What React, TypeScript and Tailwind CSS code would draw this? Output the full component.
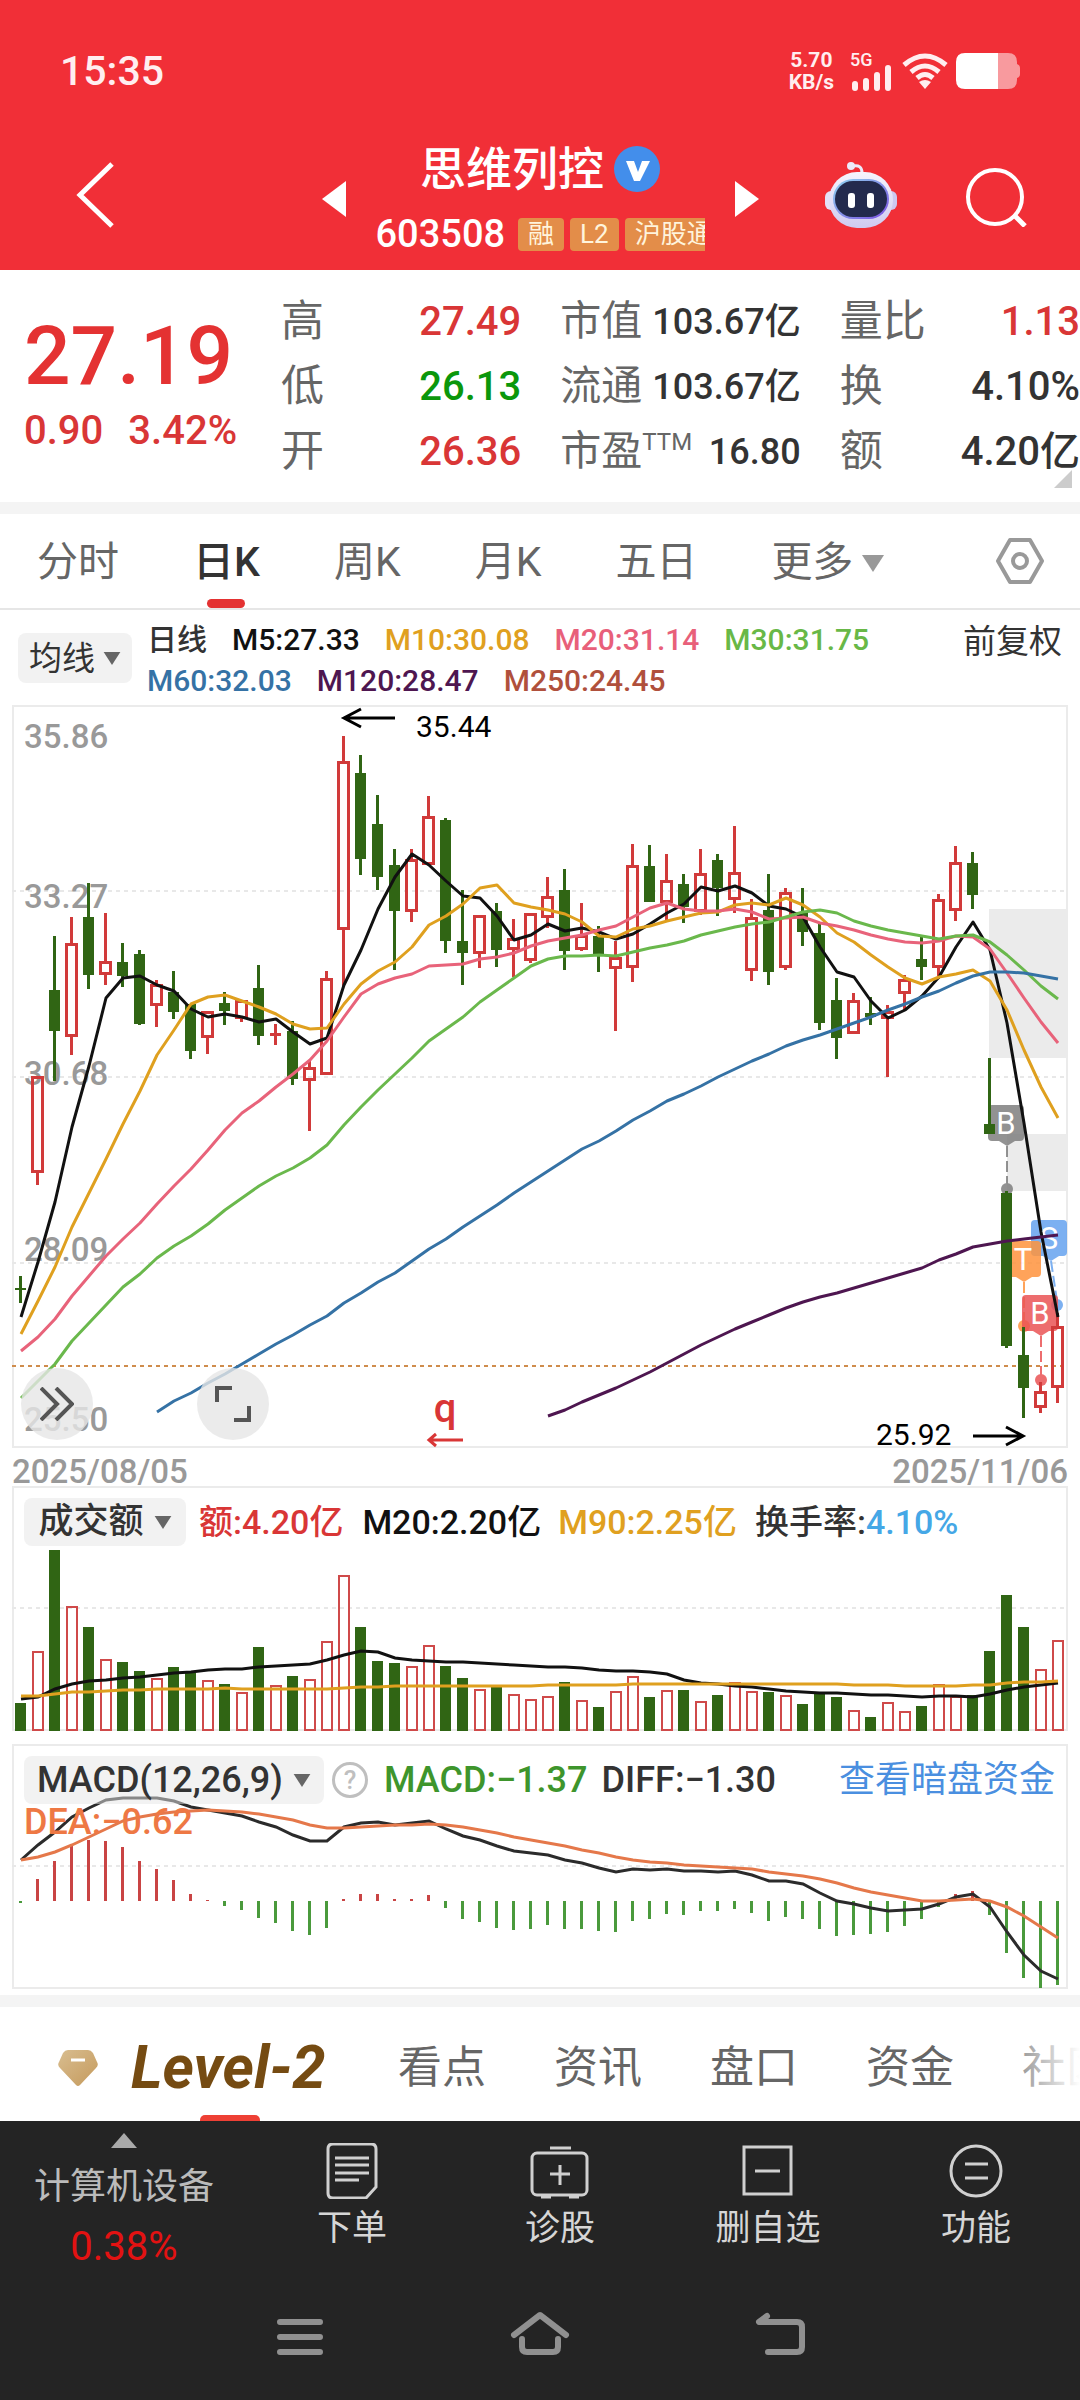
import React from "react";

type Candle = ["r" | "g", number, number, number, number];

/* direction, high, body top, body bottom, low (chart units) */
const CANDLES: Candle[] = [
  ["g", 576, 588, 590, 603], ["r", 376, 376, 473, 485], ["g", 236, 290, 331, 381], ["r", 217, 243, 337, 355],
  ["g", 183, 217, 275, 289], ["r", 213, 261, 275, 285], ["g", 243, 262, 276, 287], ["g", 250, 254, 324, 325],
  ["r", 280, 284, 306, 327], ["g", 271, 292, 312, 319], ["g", 304, 304, 351, 359], ["r", 311, 311, 338, 354],
  ["g", 292, 303, 311, 325], ["r", 300, 300, 319, 322], ["g", 265, 288, 336, 345], ["r", 324, 334, 336, 345],
  ["g", 321, 331, 379, 385], ["r", 361, 367, 381, 431], ["r", 271, 278, 375, 375], ["r", 36, 61, 230, 286],
  ["g", 55, 73, 159, 175], ["g", 95, 124, 177, 190], ["g", 149, 165, 211, 270], ["r", 149, 159, 212, 222],
  ["r", 96, 116, 165, 165], ["g", 118, 120, 241, 253], ["g", 190, 241, 253, 285], ["r", 215, 215, 254, 268],
  ["g", 203, 211, 250, 267], ["r", 219, 238, 250, 277], ["r", 213, 213, 261, 263], ["r", 177, 196, 218, 228],
  ["g", 169, 190, 251, 270], ["r", 203, 235, 250, 251], ["g", 226, 236, 254, 272], ["r", 241, 257, 269, 331],
  ["r", 144, 165, 268, 282], ["g", 145, 166, 202, 202], ["r", 154, 180, 203, 222], ["g", 174, 184, 207, 223],
  ["r", 149, 173, 212, 215], ["g", 154, 160, 188, 216], ["r", 126, 172, 200, 213], ["r", 199, 217, 271, 281],
  ["g", 174, 210, 272, 285], ["r", 188, 192, 268, 270], ["g", 188, 212, 232, 246], ["g", 223, 233, 323, 330],
  ["g", 278, 300, 338, 359], ["r", 293, 300, 334, 334], ["g", 297, 313, 317, 325], ["r", 305, 311, 319, 377],
  ["r", 275, 279, 294, 311], ["g", 236, 259, 267, 280], ["r", 194, 199, 268, 279], ["r", 146, 162, 211, 221],
  ["g", 152, 163, 195, 209], ["g", 358, 424, 434, 434], ["g", 491, 493, 646, 648], ["g", 627, 655, 688, 718],
  ["r", 682, 691, 708, 713], ["r", 613, 626, 688, 703],
];

const MA5 = [617,562,502,427,366,298,278,276,285,291,309,317,314,317,322,319,332,344,338,285,250,209,177,154,165,181,196,198,216,240,235,224,231,228,232,239,234,224,213,204,187,191,186,193,206,209,217,247,272,277,301,318,310,296,277,247,222,250,323,423,532,617];
const MA10 = [634,601,567,527,493,459,424,391,355,330,304,297,295,301,307,314,324,329,328,304,284,271,262,247,225,216,204,188,185,203,207,210,214,222,236,237,229,226,221,217,213,212,205,203,205,198,205,217,233,242,255,267,278,284,277,274,270,281,310,350,387,418];
const MA20 = [651,637,619,596,576,556,539,523,504,486,469,450,430,413,401,387,374,360,341,317,294,284,278,274,266,265,264,259,257,253,246,241,238,235,230,226,217,208,203,209,211,211,209,212,219,218,217,223,226,230,235,239,242,243,241,236,237,249,273,298,322,343];
const MA30 = [698,681,664,641,623,605,587,574,558,546,536,524,510,498,486,476,468,458,445,425,407,390,374,358,341,329,317,302,290,278,266,259,256,256,255,256,252,248,245,241,235,231,227,224,222,217,212,210,213,221,226,230,233,236,239,236,235,242,255,270,286,299];
const MA60 = [712,701,693,683,674,664,654,644,635,625,616,603,593,582,573,561,549,539,527,516,505,493,482,471,460,449,441,431,420,411,401,394,386,377,369,361,354,346,340,335,329,323,317,310,304,297,291,283,276,272,272,273,276,279];
const MA120 = [716,710,702,695,688,680,672,663,654,645,637,629,622,615,608,602,597,593,588,583,578,573,568,560,554,547,544,541,539,537,535];

const VOLUMES = [253,201,100,156,177,209,212,221,228,217,223,230,234,242,197,235,226,229,191,125,177,211,213,216,195,216,228,239,237,244,249,246,232,250,257,241,226,247,240,240,251,245,232,241,242,245,254,244,247,260,267,252,261,256,234,246,245,201,145,177,219,190];
const VMA20 = [249,247,239,234,231,230,228,227,225,223,222,220,219,219,217,216,215,214,210,205,201,202,208,210,211,212,212,213,214,215,216,217,217,218,220,221,221,222,224,230,233,234,236,237,239,241,242,243,243,244,245,245,246,247,246,246,247,244,240,237,235,233];
const VMA90 = [246,246,244,242,242,241,240,240,239,239,239,239,238,239,239,239,239,239,239,238,237,237,236,236,236,236,236,236,236,236,236,235,235,235,235,235,234,234,234,234,234,234,234,234,234,234,234,234,234,235,235,235,236,236,236,236,235,235,233,232,232,231];

const MACD_BARS = [173,149,131,116,110,111,117,131,139,150,164,170,176,180,188,193,201,205,198,169,164,164,169,169,165,178,189,192,198,200,199,195,199,199,201,202,191,189,184,185,181,181,179,183,191,187,189,199,206,205,204,202,196,189,177,164,161,185,223,248,258,255];
const DIFF = [130,115,102,87,78,70,68,68,68,71,77,80,83,86,92,97,105,111,111,97,93,92,95,93,91,99,106,110,116,121,123,125,130,133,138,142,139,140,139,141,141,142,141,145,151,151,154,163,171,174,178,181,180,179,174,167,164,177,202,225,241,249];
const DEA = [130,127,122,115,107,99,91,87,84,82,81,80,81,82,84,87,90,95,98,98,97,96,95,95,94,95,97,100,103,107,110,113,116,120,123,127,130,132,133,135,136,137,138,139,142,144,146,149,153,158,162,165,168,171,171,170,169,171,177,186,197,208];

const FIRST_X = 20;
const STEP = 17;
const MACD_ZERO = 171;

const line = (values: number[], start = 0) =>
  values.map((y, i) => `${FIRST_X + 1 + (i + start) * STEP},${y}`).join(" ");

function Caret({ className }: { className: string }) {
  return (
    <svg viewBox="0 0 18 14" className={className} aria-hidden="true">
      <path d="M0 0H18L9 14Z" fill="currentColor" />
    </svg>
  );
}

function StatusBar() {
  return (
    <div className="flex h-[142px] items-center justify-between pr-[60px] pl-[60px] font-medium text-[#ffeef0]">
      <span className="text-[41px] leading-none">15:35</span>
      <div className="flex items-center">
        <div className="mr-4 text-center text-[21px] leading-[22px] font-bold">
          <div>5.70</div>
          <div>KB/s</div>
        </div>
        <div className="mr-2 h-[40px] w-[44px]">
          <div className="text-[18px] leading-[18px]">5G</div>
          <svg viewBox="0 0 44 26" className="-mt-1 h-[26px] w-[44px]" fill="currentColor" aria-hidden="true">
            <rect x="2" y="16" width="6" height="10" rx="3" />
            <rect x="13" y="13" width="6" height="13" rx="3" />
            <rect x="24" y="7" width="6" height="19" rx="3" />
            <rect x="35" y="0" width="6" height="26" rx="3" />
          </svg>
        </div>
        <svg viewBox="0 0 46 36" className="mr-2 h-[36px] w-[46px]" fill="none" stroke="currentColor" strokeWidth="5" aria-hidden="true">
          <path d="M2 12Q23-6 44 12" />
          <path d="M9 19Q23 7 37 19" />
          <path d="M15 25Q23 18 31 25" />
          <path d="M17 29Q23 25 29 29L23 36Z" fill="currentColor" stroke="none" />
        </svg>
        <svg viewBox="0 0 64 36" className="h-[36px] w-[64px]" aria-hidden="true">
          <path d="M42 0H52Q61 0 61 9V11Q64 12 64 15V21Q64 24 61 25V27Q61 36 52 36H42Z" fill="#f89a9e" />
          <path d="M9 0H42V36H9Q0 36 0 27V9Q0 0 9 0Z" fill="#fff" />
        </svg>
      </div>
    </div>
  );
}

function Robot() {
  return (
    <svg viewBox="0 0 72 66" className="h-[66px] w-[72px]" aria-hidden="true">
      <defs>
        <linearGradient id="shell" x1="0" y1="0" x2="0" y2="1">
          <stop offset="0" stopColor="#f6f4fd" />
          <stop offset="1" stopColor="#cfcaf0" />
        </linearGradient>
        <linearGradient id="rim" x1="0" y1="0" x2="1" y2="1">
          <stop offset="0" stopColor="#8fd4f0" />
          <stop offset="1" stopColor="#7a4fe0" />
        </linearGradient>
      </defs>
      <path d="M37 11C37 5 34 3 28 4" fill="none" stroke="#eceafa" strokeWidth="3" />
      <circle cx="26" cy="4" r="4" fill="#eceafa" />
      <rect x="0" y="29" width="12" height="19" rx="6" fill="#e4e1f7" />
      <rect x="60" y="29" width="12" height="19" rx="6" fill="#cdc8f0" />
      <rect x="4" y="10" width="64" height="56" rx="28" fill="url(#shell)" />
      <rect x="8" y="17" width="56" height="40" rx="20" fill="url(#rim)" />
      <rect x="10" y="19" width="52" height="36" rx="18" fill="#232a4d" />
      <rect x="23" y="31" width="7" height="15" rx="3" fill="#fff" />
      <rect x="42" y="31" width="7" height="15" rx="3" fill="#fff" />
    </svg>
  );
}

function Header() {
  return (
    <header className="bg-[#f12f37] text-white">
      <StatusBar />
      <div className="grid h-[128px] grid-cols-[1fr_auto_1fr] items-start">
        <button aria-label="返回" className="mt-[20px] ml-[75px] w-[40px]">
          <svg viewBox="0 0 40 66" className="h-[66px] w-[40px]" fill="none" stroke="#fff" strokeWidth="5">
            <path d="M37 2L5 33L37 64" />
          </svg>
        </button>
        <div className="flex items-center gap-[30px]">
          <button aria-label="上一只">
            <svg viewBox="0 0 24 36" className="h-[36px] w-[24px]"><path d="M24 0V36L0 18Z" fill="#fff" /></svg>
          </button>
          <div className="w-[329px]">
            <div className="flex h-[54px] items-center justify-center gap-[10px]">
              <h1 className="text-[46px] leading-none font-medium">思维列控</h1>
              <svg viewBox="0 0 46 46" className="h-[46px] w-[46px]" aria-label="认证">
                <circle cx="23" cy="23" r="23" fill="#438eeb" />
                <path d="M12 15H20L24 26L28 15H36L26 35H20Z" fill="#fff" />
              </svg>
            </div>
            <div className="mt-[16px] flex h-[44px] items-center gap-[6px] overflow-hidden text-[#fff4dc]">
              <span className="mr-[7px] text-[38px] leading-none font-medium text-white">603508</span>
              <span className="shrink-0 rounded bg-[#e38d49] px-[10px] text-[26px] leading-[33px]">融</span>
              <span className="shrink-0 rounded bg-[#e38d49] px-[10px] text-[26px] leading-[33px]">L2</span>
              <span className="shrink-0 rounded bg-[#e38d49] px-[10px] text-[26px] leading-[33px]">沪股通</span>
            </div>
          </div>
          <button aria-label="下一只">
            <svg viewBox="0 0 24 36" className="h-[36px] w-[24px]"><path d="M0 0V36L24 18Z" fill="#fff" /></svg>
          </button>
        </div>
        <div className="mt-[20px] flex justify-end gap-[68px] pr-[53px]">
          <button aria-label="智能助手"><Robot /></button>
          <button aria-label="搜索">
            <svg viewBox="0 0 62 64" className="h-[64px] w-[62px]" fill="none" stroke="#fff" strokeWidth="4">
              <circle cx="30" cy="34" r="27" />
              <path d="M49 52L60 63" strokeWidth="5" />
            </svg>
          </button>
        </div>
      </div>
    </header>
  );
}

const QUOTES: { label: React.ReactNode; value: string; tone: string; compact?: boolean }[][] = [
  [
    { label: "高", value: "27.49", tone: "text-[#d93636]" },
    { label: "低", value: "26.13", tone: "text-[#0b970b]" },
    { label: "开", value: "26.36", tone: "text-[#d93636]" },
  ],
  [
    { label: "市值", value: "103.67亿", tone: "text-[#333]", compact: true },
    { label: "流通", value: "103.67亿", tone: "text-[#333]", compact: true },
    { label: <>市盈<span className="self-start text-[24px] leading-[46px]">TTM</span></>, value: "16.80", tone: "text-[#333]", compact: true },
  ],
  [
    { label: "量比", value: "1.13", tone: "text-[#d93636]" },
    { label: "换", value: "4.10%", tone: "text-[#333]" },
    { label: "额", value: "4.20亿", tone: "text-[#333]" },
  ],
];

function Quote() {
  return (
    <section className="relative flex pt-[19px] pb-[18px]">
      <div className="w-[281px] shrink-0 pt-[26px] pl-6 text-[#d93636]">
        <div className="text-[82px] leading-[82px] font-medium text-[#e43232]">27.19</div>
        <div className="mt-[14px] flex gap-[25px] text-[40px] leading-[40px] font-medium">
          <span>0.90</span>
          <span>3.42%</span>
        </div>
      </div>
      <div className="grid flex-1 grid-cols-3 gap-x-[39px]">
        {QUOTES.map((col, i) => (
          <dl key={i}>
            {col.map((q, j) => (
              <div key={j} className="flex h-[65px] items-center justify-between whitespace-nowrap">
                <dt className={q.compact ? "flex text-[41px] leading-[65px] text-[#666]" : "text-[43px] text-[#666]"}>{q.label}</dt>
                <dd className={`${q.tone} ${q.compact ? "text-[36px]" : "text-[40px]"} font-medium`}>{q.value}</dd>
              </div>
            ))}
          </dl>
        ))}
      </div>
      <svg viewBox="0 0 18 18" className="absolute right-[8px] bottom-[14px] h-[18px] w-[18px]" aria-hidden="true">
        <path d="M18 0V18H0Z" fill="#ccc" />
      </svg>
    </section>
  );
}

function PeriodTabs() {
  return (
    <nav className="flex h-[96px] items-stretch gap-[74px] border-b-2 border-[#e6e6e6] pr-[36px] pl-[37px] text-[41px] text-[#666]">
      {["分时", "日K", "周K", "月K", "五日"].map((t) => (
        <button key={t} className={t === "日K" ? "relative pt-1 font-medium text-[#333]" : "pt-1"}>
          {t}
          {t === "日K" && <span className="absolute bottom-0 left-1/2 h-[9px] w-[38px] -translate-x-1/2 rounded-full bg-[#e43232]" />}
        </button>
      ))}
      <button className="flex items-center gap-[9px] pt-1">
        更多
        <Caret className="h-[19px] w-[22px] text-[#999]" />
      </button>
      <button aria-label="设置" className="ml-auto">
        <svg viewBox="0 0 48 46" className="h-[46px] w-[48px]" fill="none" stroke="#999" strokeWidth="4" strokeLinejoin="round">
          <path d="M14 2H34L46 23L34 44H14L2 23Z" />
          <circle cx="24" cy="23" r="7" />
        </svg>
      </button>
    </nav>
  );
}

const MA_LEGEND = [
  ["日线", "text-[#333]"],
  ["M5:27.33", "text-[#111]"],
  ["M10:30.08", "text-[#e0a020]"],
  ["M20:31.14", "text-[#e8607a]"],
  ["M30:31.75", "text-[#68b847]"],
  ["M60:32.03", "text-[#3572a5]"],
  ["M120:28.47", "text-[#4e1650]"],
  ["M250:24.45", "text-[#b0503c]"],
];

function MaLegend() {
  return (
    <div className="flex h-[95px] items-center pr-[18px] pl-[18px]">
      <button className="flex h-[50px] w-[114px] shrink-0 items-center justify-center gap-[8px] rounded-lg bg-[#f2f2f2] pt-[2px] text-[33px] text-[#333]">
        均线
        <Caret className="h-[13px] w-[18px] text-[#666]" />
      </button>
      <div className="ml-[15px] flex flex-1 flex-wrap gap-x-[25px] pt-[5px] text-[30px] leading-[41px]">
        {MA_LEGEND.map(([t, c]) => <span key={t} className={`${c} font-medium`}>{t}</span>)}
      </div>
      <button className="mb-[32px] text-[33px] leading-[40px] text-[#333]">前复权</button>
    </div>
  );
}

function Flag({ x, y, color, letter, tipX, dotX, dotY }: { x: number; y: number; color: string; letter: string; tipX: number; dotX: number; dotY: number }) {
  return (
    <g opacity="0.85">
      <path d={`M${tipX} ${y + 41}L${dotX} ${dotY - 4}`} stroke={color} strokeWidth="2" strokeDasharray="11 4" />
      <circle cx={dotX} cy={dotY} r="6" fill={color} />
      <path d={`M${tipX - 8} ${y + 36}H${tipX + 8}L${tipX} ${y + 41}Z`} fill={color} />
      <rect x={x} y={y} width="36" height="36" rx="4" fill={color} />
      <text x={x + 18} y={y + 29} textAnchor="middle" fontSize="31" fill="#fff">{letter}</text>
    </g>
  );
}

function CandleChart() {
  return (
    <div className="relative">
      <svg viewBox="12 5 1056 743" className="block h-auto w-full overflow-visible" fill="none" aria-label="日K线图">
        <rect x="13" y="6" width="1054" height="741" stroke="#ebebeb" strokeWidth="2" />
        {[191, 377, 563].map((y) => (
          <path key={y} d={`M12 ${y}H1068`} stroke="#e8e8e8" strokeWidth="2" strokeDasharray="4 4" />
        ))}
        <rect x="989" y="209" width="79" height="149" fill="#ebebeb" />
        <rect x="1007" y="434" width="61" height="57" fill="#ebebeb" />
        <path d="M12 666H1068" stroke="#cf8c4c" strokeWidth="2" strokeDasharray="4 4" />
        <g fill="#999" fontSize="33" fontWeight="500">
          <text x="24" y="48">35.86</text>
          <text x="24" y="208">33.27</text>
          <text x="24" y="385">30.68</text>
          <text x="24" y="561">28.09</text>
          <text x="24" y="731">25.50</text>
        </g>
        <Flag x={988} y={405} color="#808080" letter="B" tipX={1007} dotX={1007} dotY={489} />
        <Flag x={1031} y={520} color="#66a3ef" letter="S" tipX={1051} dotX={1057} dotY={605} />
        <Flag x={1005} y={541} color="#ff943e" letter="T" tipX={1024} dotX={1024} dotY={626} />
        <Flag x={1022} y={595} color="#ea5455" letter="B" tipX={1041} dotX={1041} dotY={680} />
        {CANDLES.map(([dir, high, top, bottom, low], i) => {
          const x = FIRST_X + i * STEP;
          if (dir === "g") {
            return (
              <g key={i} fill="#306514">
                <rect x={x - 1} y={high} width="3" height={low - high} />
                <rect x={x - 5} y={top} width="11" height={bottom - top} />
              </g>
            );
          }
          if (bottom - top < 6) {
            return (
              <g key={i} fill="#d13a3a">
                <rect x={x - 1} y={high} width="3" height={low - high} />
                <rect x={x - 5} y={top - 1} width="11" height={bottom - top + 1} />
              </g>
            );
          }
          return (
            <g key={i} stroke="#d13a3a" strokeWidth="3">
              <path d={`M${x + 0.5} ${high}V${top}M${x + 0.5} ${bottom}V${low}`} />
              <rect x={x - 4.5} y={top + 1.5} width="10" height={bottom - top - 3} />
            </g>
          );
        })}
        <g strokeWidth="3" strokeLinejoin="round">
          <polyline points={line(MA5)} stroke="#111" />
          <polyline points={line(MA10)} stroke="#dfa01f" />
          <polyline points={line(MA20)} stroke="#e8637a" />
          <polyline points={line(MA30)} stroke="#6ab84c" />
          <polyline points={line(MA60, 8)} stroke="#3572a5" />
          <polyline points={line(MA120, 31)} stroke="#4e1650" />
        </g>
        <g stroke="#000" strokeWidth="3">
          <path d="M395 18H344M361 9L344 18L361 27" />
          <path d="M973 736H1023M1006 727L1023 736L1006 745" />
        </g>
        <g fill="#000" fontSize="30">
          <text x="416" y="37">35.44</text>
          <text x="876" y="745">25.92</text>
        </g>
        <text x="445" y="722" textAnchor="middle" fontSize="40" fontWeight="500" fill="#d93636">q</text>
        <path d="M463 740H429M436 734L429 740L436 746" stroke="#d93636" strokeWidth="3" />
      </svg>
      <button aria-label="展开" className="absolute bottom-[8px] left-[9px] flex size-[72px] items-center justify-center rounded-full bg-[#e6e6e6]/80">
        <svg viewBox="0 0 34 34" className="size-[34px]" fill="none" stroke="#555" strokeWidth="4">
          <path d="M1 1L17 17L1 33M16 1L32 17L16 33" />
        </svg>
      </button>
      <button aria-label="全屏" className="absolute bottom-[8px] left-[185px] flex size-[72px] items-center justify-center rounded-full bg-[#e6e6e6]/80">
        <svg viewBox="0 0 36 36" className="size-[36px]" fill="none" stroke="#555" strokeWidth="4">
          <path d="M2 16V2H17M34 20V34H19" />
        </svg>
      </button>
    </div>
  );
}

function VolumeChart() {
  return (
    <div className="relative">
      <svg viewBox="12 36 1056 245" className="block h-auto w-full" fill="none" aria-label="成交额图">
        <rect x="13" y="37" width="1054" height="243" stroke="#ebebeb" strokeWidth="2" />
        <path d="M12 158H1068" stroke="#e8e8e8" strokeWidth="2" strokeDasharray="4 4" />
        {VOLUMES.map((top, i) => {
          const x = FIRST_X + i * STEP;
          return CANDLES[i][0] === "g" ? (
            <rect key={i} x={x - 5} y={top} width="11" height={281 - top} fill="#306514" />
          ) : (
            <rect key={i} x={x - 4} y={top + 1} width="10" height={279 - top} stroke="#cf4a4a" strokeWidth="2" />
          );
        })}
        <polyline points={line(VMA20)} stroke="#111" strokeWidth="3" />
        <polyline points={line(VMA90)} stroke="#dfa01f" strokeWidth="3" />
      </svg>
      <div className="absolute inset-x-0 top-0 flex items-center pt-[11px] pl-[12px] text-[34px] leading-[50px] font-medium whitespace-nowrap">
        <button className="flex h-[48px] w-[162px] shrink-0 items-center justify-center gap-[10px] rounded-lg bg-[#f2f2f2] text-[35px] text-[#333]">
          成交额
          <Caret className="h-[13px] w-[18px] text-[#666]" />
        </button>
        <span className="ml-[13px] text-[#d93636]">额:4.20亿</span>
        <span className="ml-[19px] text-[#111]">M20:2.20亿</span>
        <span className="ml-[17px] text-[#e0a020]">M90:2.25亿</span>
        <span className="ml-[18px] text-[#333]">换手率:<span className="text-[#45a7e6]">4.10%</span></span>
      </div>
    </div>
  );
}

function MacdChart() {
  return (
    <div className="relative">
      <svg viewBox="12 14 1056 245" className="block h-auto w-full" fill="none" aria-label="MACD图">
        <rect x="13" y="15" width="1054" height="243" stroke="#ebebeb" strokeWidth="2" />
        <path d="M12 136H1068" stroke="#e8e8e8" strokeWidth="2" strokeDasharray="4 4" />
        {MACD_BARS.map((y, i) => (
          <rect
            key={i}
            x={FIRST_X - 1 + i * STEP}
            y={Math.min(y, MACD_ZERO)}
            width="3"
            height={Math.abs(y - MACD_ZERO)}
            fill={y < MACD_ZERO ? "#c94444" : "#4a9a3c"}
          />
        ))}
        <polyline points={line(DIFF)} stroke="#2b2b2b" strokeWidth="3" />
        <polyline points={line(DEA)} stroke="#e5784a" strokeWidth="3" />
      </svg>
      <div className="absolute inset-x-0 top-0 pt-[11px] pr-[13px] pl-[12px] text-[36px] font-medium whitespace-nowrap">
        <div className="flex items-center leading-[50px]">
          <button className="flex h-[48px] w-[300px] shrink-0 items-center gap-[10px] rounded-lg bg-[#e6e6e6]/50 pl-[13px] text-[#333]">
            MACD(12,26,9)
            <Caret className="h-[13px] w-[18px] text-[#666]" />
          </button>
          <button aria-label="说明" className="ml-[8px] flex size-[36px] shrink-0 items-center justify-center rounded-full border-[3px] border-[#bfbfbf] text-[26px] leading-none text-[#bfbfbf]">?</button>
          <span className="ml-[16px] text-[#3e952c]">MACD:−1.37</span>
          <span className="ml-[14px] text-[#333]">DIFF:−1.30</span>
          <a href="#dark-pool" className="ml-auto font-normal text-[#4a8fe0]">查看暗盘资金</a>
        </div>
        <div className="leading-[34px] text-[#ee7844]">DEA:−0.62</div>
      </div>
    </div>
  );
}

function InfoTabs() {
  return (
    <nav className="relative flex h-[114px] items-center overflow-hidden text-[44px] whitespace-nowrap text-[#666]">
      <button className="relative flex h-full w-[398px] shrink-0 items-center pt-[8px] pl-[58px]">
        <svg viewBox="0 0 40 37" className="mr-[33px] h-[37px] w-[40px]" aria-hidden="true">
          <defs>
            <linearGradient id="gem" x1="0" y1="0" x2="1" y2="1">
              <stop offset="0" stopColor="#d8bd90" />
              <stop offset="1" stopColor="#c59a5c" />
            </linearGradient>
          </defs>
          <path d="M10 0H30Q33 0 35 3L39 12Q41 15 38 18L22 35Q20 37 18 35L2 18Q-1 15 1 12L5 3Q7 0 10 0Z" fill="url(#gem)" />
          <path d="M13 10H27" stroke="#fff" strokeWidth="3" />
        </svg>
        <span className="text-[60px] leading-none font-bold text-[#754b12] italic">Level-2</span>
        <span className="absolute bottom-0 left-[200px] h-[6px] w-[60px] rounded-t-[5px] bg-[#ee4035]" />
      </button>
      <div className="flex gap-[68px] pt-[8px]">
        {["看点", "资讯", "盘口", "资金", "社区"].map((t) => <button key={t} className="shrink-0">{t}</button>)}
      </div>
      <div className="absolute inset-y-0 right-0 w-[72px] bg-linear-to-r from-white/20 to-white" />
    </nav>
  );
}

function BottomBar() {
  const icon = "h-[56px] w-[60px]";
  const items: [string, React.ReactNode][] = [
    ["下单", (
      <svg viewBox="0 0 60 56" className={icon}>
        <path d="M11 1H49Q54 1 54 6V44L44 55H11Q6 55 6 50V6Q6 1 11 1Z" />
        <path d="M13 15H47M13 22H47M13 30H47M13 37H37" />
      </svg>
    )],
    ["诊股", (
      <svg viewBox="0 0 60 56" className={icon}>
        <path d="M20 5H41" />
        <rect x="2" y="10" width="55" height="42" rx="5" />
        <path d="M20 31H40M30 22V42M11 54H21M39 54H49" />
      </svg>
    )],
    ["删自选", (
      <svg viewBox="0 0 60 56" className={icon}>
        <rect x="6" y="4" width="47" height="47" />
        <path d="M17 28H42" />
      </svg>
    )],
    ["功能", (
      <svg viewBox="0 0 60 56" className={icon}>
        <circle cx="30" cy="28" r="25" />
        <path d="M19 21H42M19 35H42" />
      </svg>
    )],
  ];
  return (
    <footer className="bg-[#242424] text-[#ccc]">
      <div className="flex h-[150px]">
        <button className="flex w-[248px] flex-col items-center pt-[12px] text-[36px] text-[#bbb]">
          <svg viewBox="0 0 26 15" className="h-[15px] w-[26px]" aria-hidden="true"><path d="M13 0L26 15H0Z" fill="#aaa" /></svg>
          <span className="mt-[19px] leading-[40px]">计算机设备</span>
          <span className="mt-[20px] text-[40px] leading-[40px] text-[#e31212]">0.38%</span>
        </button>
        <div className="grid flex-1 grid-cols-4">
          {items.map(([t, svg]) => (
            <button key={t} className="flex flex-col items-center pt-[22px] text-[35px] leading-[44px] text-[#d6d6d6] [&_svg]:fill-none [&_svg]:stroke-[#d0d0d0] [&_svg]:stroke-3">
              {svg}
              <span className="mt-[8px]">{t}</span>
            </button>
          ))}
        </div>
      </div>
      <div className="flex h-[129px] justify-center gap-[180px] pt-[40px] [&_svg]:h-[46px] [&_svg]:w-[60px] [&_svg]:fill-none [&_svg]:stroke-[#909090] [&_svg]:stroke-[6]">
        <button aria-label="最近任务" className="h-[46px]">
          <svg viewBox="0 0 60 46" strokeLinecap="round"><path d="M10 11H50M10 26H50M10 41H50" /></svg>
        </button>
        <button aria-label="主页" className="h-[46px]">
          <svg viewBox="0 0 60 46" strokeLinecap="round" strokeLinejoin="round"><path d="M4 24L30 4L56 24M12 28V36Q12 41 17 41H43Q48 41 48 36V28" /></svg>
        </button>
        <button aria-label="后退" className="h-[46px]">
          <svg viewBox="0 0 60 46" strokeLinecap="round" strokeLinejoin="round"><path d="M17 5L9 11H47Q52 11 52 16V36Q52 41 47 41H18" /></svg>
        </button>
      </div>
    </footer>
  );
}

export default function App() {
  return (
    <div className="w-full overflow-x-hidden bg-white font-['Roboto','Noto_Sans_CJK_SC',sans-serif]">
      <Header />
      <main>
        <Quote />
        <div className="h-[12px] bg-[#f4f4f4]" />
        <PeriodTabs />
        <MaLegend />
        <section className="px-3 pb-[6px]">
          <CandleChart />
          <div className="flex h-[38px] items-start justify-between text-[33px] leading-[48px] font-medium text-[#999]">
            <time>2025/08/05</time>
            <time>2025/11/06</time>
          </div>
          <VolumeChart />
          <div className="h-[13px]" />
          <MacdChart />
        </section>
        <div className="h-[12px] bg-[#f4f4f4]" />
        <InfoTabs />
      </main>
      <BottomBar />
    </div>
  );
}
